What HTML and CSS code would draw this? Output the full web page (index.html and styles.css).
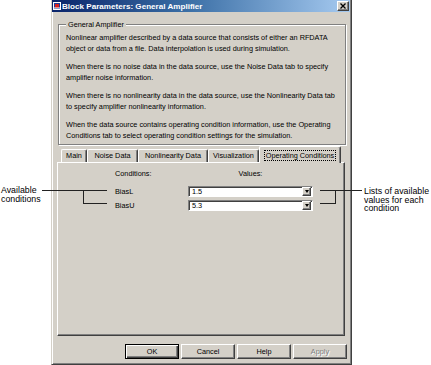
FILE: index.html
```html
<!DOCTYPE html>
<html>
<head>
<meta charset="utf-8">
<link rel="stylesheet" href="styles.css">
</head>
<body>
<div class="page">
  <div class="dialog">
    <div class="titlebar">
      <svg class="ticon" width="8" height="8" viewBox="0 0 8 8"><rect x="0" y="0" width="8" height="8" fill="#d4d0c8"/><rect x="0.5" y="0.5" width="7" height="7" fill="#1c3c9c" stroke="#fff" stroke-width="1"/><path d="M2 2h4v4H2z" fill="#d62020"/><path d="M1 6h6" stroke="#fff" stroke-width="1"/></svg>
      <span class="ttext">Block Parameters: General Amplifier</span>
      <span class="close"><svg width="6" height="6" viewBox="0 0 6 6"><path d="M0.5 0.5L5.5 5.5M5.5 0.5L0.5 5.5" stroke="#000" stroke-width="1.3"/></svg></span>
    </div>
    <div class="group">
      <div class="legend">General Amplifier</div>
      <p>Nonlinear amplifier described by a data source that consists of either an RFDATA<br>object or data from a file. Data interpolation is used during simulation.</p>
      <p>When there is no noise data in the data source, use the Noise Data tab to specify<br>amplifier noise information.</p>
      <p>When there is no nonlinearity data in the data source, use the Nonlinearity Data tab<br>to specify amplifier nonlinearity information.</p>
      <p>When the data source contains operating condition information, use the Operating<br>Conditions tab to select operating condition settings for the simulation.</p>
    </div>
    <div class="tabs">
      <div class="tab tab-main">Main</div>
      <div class="tab tab-noise">Noise Data</div>
      <div class="tab tab-nonlin">Nonlinearity Data</div>
      <div class="tab tab-vis">Visualization</div>
      <div class="tab tab-op selected"><span class="focus">Operating Conditions</span></div>
    </div>
    <div class="panel">
      <div class="cond-grid">
        <div class="hdr hdr-cond">Conditions:</div>
        <div class="hdr hdr-val">Values:</div>
        <div class="lbl">BiasL</div>
        <div class="combo"><span class="cval">1.5</span><span class="drop"><span class="tri"></span></span></div>
        <div class="lbl">BiasU</div>
        <div class="combo"><span class="cval">5.3</span><span class="drop"><span class="tri"></span></span></div>
      </div>
    </div>
    <div class="buttons">
      <div class="btn default">OK</div>
      <div class="btn">Cancel</div>
      <div class="btn">Help</div>
      <div class="btn disabled">Apply</div>
    </div>
  </div>
  <svg class="callouts" width="431" height="365" viewBox="0 0 431 365">
    <path d="M42 190.5H107M83.5 190V204M83 203.5H107" stroke="#222" stroke-width="1" fill="none"/>
    <path d="M320 190.5H362M335.5 190V204M320 203.5H336" stroke="#222" stroke-width="1" fill="none"/>
  </svg>
  <div class="note note-left">Available<br>conditions</div>
  <div class="note note-right">Lists of available<br>values for each<br>condition</div>
</div>
</body>
</html>
```
FILE: styles.css
```css
* { box-sizing: border-box; }
html, body { margin: 0; padding: 0; background: #fff; }
body { font-family: "Liberation Sans", Arial, sans-serif; font-size: 7.3px; color: #000; }
.page { position: relative; width: 431px; height: 365px; overflow: hidden; }

.dialog {
  margin-left: 51px;
  width: 301px;
  height: 365px;
  background: #d4d0c8;
  border-left: 1px solid #d4d0c8;
  border-right: 1px solid #404040;
  border-bottom: 1px solid #404040;
  box-shadow: inset 1px 0 0 #fff, inset -1px -1px 0 #808080;
  padding: 0 1px 0 1px;
  display: flex;
  flex-direction: column;
}

.titlebar {
  height: 12px;
  background: linear-gradient(to right, #0a246a 0%, #3a6ea5 45%, #a6caf0 100%);
  display: flex;
  align-items: center;
  margin-left: -1px;
}
.ticon { margin-left: 1px; flex: none; }
.ttext { color: #fff; font-weight: bold; font-size: 8.1px; margin-left: 1px; flex: 1; white-space: nowrap; }
.close {
  width: 12px; height: 10px;
  margin-right: 1px;
  background: #d4d0c8;
  border-top: 1px solid #fff; border-left: 1px solid #fff;
  border-right: 1px solid #404040; border-bottom: 1px solid #404040;
  box-shadow: inset -1px -1px 0 #808080;
  display: flex; align-items: center; justify-content: center;
}

.group {
  margin: 12px 4px 0 5px;
  border: 1px solid #808080;
  box-shadow: inset 1px 1px 0 #fff, 1px 1px 0 #fff;
  padding: 0 6px 3px 7px;
}
.legend {
  display: table;
  margin: -6px 0 0 0;
  padding: 0 2px;
  background: #d4d0c8;
  line-height: 11px;
}
.group p { margin: 2px 0 7px 0; line-height: 11px; white-space: nowrap; }
.group p + p { margin-top: 0; }
.group p:last-child { margin-bottom: 0; }

.tabs {
  display: flex;
  align-items: flex-start;
  margin-top: 1px;
  padding-left: 8px;
  height: 16px;
  position: relative;
  z-index: 1;
}
.tab {
  height: 13px;
  margin-top: 3px;
  border-top: 1px solid #fff;
  border-left: 1px solid #fff;
  border-right: 1px solid #404040;
  box-shadow: inset -1px 0 0 #808080;
  border-radius: 2px 2px 0 0;
  line-height: 11px;
  text-align: center;
  white-space: nowrap;
  flex: none;
}
.tab-main { width: 26px; }
.tab-noise { width: 51px; }
.tab-nonlin { width: 70px; }
.tab-vis { width: 51px; }
.tab-op { width: 82px; }
.tab.selected {
  height: 17px;
  margin-top: 0;
  background: #d4d0c8;
  padding-top: 3px;
}
.focus { border: 1px dotted #000; padding: 0 1px; line-height: 9px; display: inline-block; }

.panel {
  margin: 0 5px 0 4px;
  height: 174px;
  border-top: 1px solid #fff;
  border-left: 1px solid #fff;
  border-right: 1px solid #404040;
  border-bottom: 1px solid #404040;
  box-shadow: inset -1px -1px 0 #808080;
  padding: 5px 0 0 57px;
}
.cond-grid {
  display: grid;
  grid-template-columns: 73px 125px;
  row-gap: 3px;
  align-items: center;
}
.hdr { line-height: 11px; margin-bottom: 4px; }
.hdr-val { text-align: center; }
.lbl { line-height: 11px; }
.combo {
  height: 11px;
  background: #fff;
  border-top: 1px solid #808080; border-left: 1px solid #808080;
  border-right: 1px solid #fff; border-bottom: 1px solid #fff;
  box-shadow: inset 1px 1px 0 #404040;
  display: flex;
  align-items: center;
  justify-content: space-between;
}
.cval { padding-left: 3px; line-height: 9px; }
.drop {
  width: 9px; height: 9px;
  margin-right: 1px;
  background: #d4d0c8;
  border-top: 1px solid #fff; border-left: 1px solid #fff;
  border-right: 1px solid #404040; border-bottom: 1px solid #404040;
  box-shadow: inset -1px -1px 0 #808080;
  display: flex; align-items: center; justify-content: center;
}
.tri { width: 0; height: 0; border-left: 2.5px solid transparent; border-right: 2.5px solid transparent; border-top: 3px solid #000; }

.buttons {
  display: flex;
  justify-content: flex-end;
  gap: 2px;
  margin-top: 8px;
  padding-right: 3px;
}
.btn {
  width: 54px; height: 15px;
  border-top: 1px solid #fff; border-left: 1px solid #fff;
  border-right: 1px solid #404040; border-bottom: 1px solid #404040;
  box-shadow: inset -1px -1px 0 #808080;
  display: flex; align-items: center; justify-content: center;
}
.btn.default {
  border: 1px solid #000;
  box-shadow: inset 1px 1px 0 #fff, inset -1px -1px 0 #404040, inset -2px -2px 0 #808080;
}
.btn.disabled { color: #808080; text-shadow: 1px 1px 0 #fff; }

.callouts { position: absolute; left: 0; top: 0; pointer-events: none; }
.note { position: absolute; font-size: 8.8px; line-height: 8.5px; color: #000; white-space: nowrap; }
.note-left { left: 1px; top: 186px; }
.note-right { left: 364px; top: 187px; }
```
